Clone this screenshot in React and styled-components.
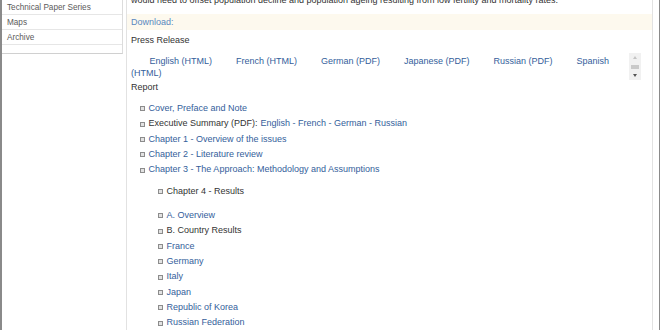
import React from 'react'
import styled, { createGlobalStyle } from 'styled-components'

const Global = createGlobalStyle`
  html, body {
    margin: 0;
    padding: 0;
    background: #fff;
  }
  body {
    font-family: "Liberation Sans", Arial, sans-serif;
    color: #333;
  }
`

const Page = styled.div`
  width: 660px;
  height: 330px;
  box-sizing: border-box;
  display: flex;
  overflow: hidden;
  border-left: 2px solid #8a8a8a;
  border-right: 1px solid #8a8a8a;
  background: #fff;
`

const Sidebar = styled.ul`
  list-style: none;
  margin: 0;
  padding: 0;
  width: 120px;
  flex: none;
  align-self: flex-start;
  border-right: 1px solid #dcdcdc;
  border-bottom: 1px solid #d0d0d0;
`

const SideItem = styled.li`
  height: 14px;
  line-height: 15px;
  padding-left: 5px;
  font-size: 8.2px;
  color: #5a5a5a;
  border-bottom: 1px solid #e6e6e6;
  &:last-child {
    border-bottom: none;
    height: 7.5px;
  }
`

const Main = styled.div`
  flex: 1;
  margin-left: 3px;
  margin-right: 6px;
  border-left: 1px solid #e2e2e2;
  border-right: 1px solid #e2e2e2;
  font-size: 9px;
  color: #333;
`

const Intro = styled.p`
  margin: -7px 0 0;
  padding-left: 4px;
  height: 14px;
  line-height: 14px;
  white-space: nowrap;
`

const DownloadBar = styled.div`
  margin-top: 7px;
  height: 16px;
  line-height: 16px;
  padding-left: 4px;
  background: #fdf9ee;
  color: #5a88bf;
`

const Label = styled.div`
  padding-left: 4px;
  height: ${p => p.$h || 12}px;
  line-height: ${p => p.$h || 12}px;
`

const LinksRow = styled.div`
  display: flex;
  align-items: flex-start;
  padding-left: 4px;
  margin-top: 5px;
`

const LinksText = styled.div`
  width: 495px;
  line-height: 12px;
`

const LangLink = styled.a`
  color: #34609b;
  text-decoration: none;
  margin-left: ${p => p.$first ? 18.5 : 24}px;
`

const Scroller = styled.div`
  width: 12px;
  height: 27px;
  margin-left: 3px;
  margin-top: -2px;
  background: #f1f1f1;
  display: flex;
  flex-direction: column;
  align-items: center;
  justify-content: space-between;
  padding: 3px 0;
  box-sizing: border-box;
`

const Arrow = styled.div`
  width: 0;
  height: 0;
  border-left: 2.5px solid transparent;
  border-right: 2.5px solid transparent;
  ${p => p.$down
    ? 'border-top: 3px solid #555;'
    : 'border-bottom: 3px solid #c4c4c4;'}
`

const Thumb = styled.div`
  width: 8px;
  height: 4px;
  background: #c9c9c9;
`

const List = styled.ul`
  list-style: none;
  margin: ${p => p.$top || 0}px 0 0;
  padding-left: ${p => p.$indent}px;
`

const Item = styled.li`
  display: flex;
  align-items: center;
  height: 15.35px;
  line-height: 15.35px;
  color: ${p => p.$plain ? '#333' : '#34609b'};
  &::before {
    content: '';
    width: 3px;
    height: 3px;
    border: 1px solid #8c8c8c;
    background: #e2e2e2;
    margin-right: 3.5px;
    flex: none;
  }
`

const Blue = styled.span`
  color: #34609b;
  margin-left: 3px;
`

const langs = [
  'English (HTML)',
  'French (HTML)',
  'German (PDF)',
  'Japanese (PDF)',
  'Russian (PDF)',
  'Spanish (HTML)',
]

const chapters = [
  'Chapter 1 - Overview of the issues',
  'Chapter 2 - Literature review',
  'Chapter 3 - The Approach: Methodology and Assumptions',
]

const countries = ['France', 'Germany', 'Italy', 'Japan', 'Republic of Korea', 'Russian Federation']

export default function App () {
  return (
    <Page>
      <Global />
      <Sidebar>
        <SideItem>Technical Paper Series</SideItem>
        <SideItem>Maps</SideItem>
        <SideItem>Archive</SideItem>
        <SideItem />
      </Sidebar>
      <Main>
        <Intro>would need to offset population decline and population ageing resulting from low fertility and mortality rates.</Intro>
        <DownloadBar>Download:</DownloadBar>
        <Label $h={20}>Press Release</Label>
        <LinksRow>
          <LinksText>
            {langs.map((l, i) => (
              <LangLink key={l} href="#" $first={i === 0}>{l}</LangLink>
            ))}
          </LinksText>
          <Scroller>
            <Arrow />
            <Thumb />
            <Arrow $down />
          </Scroller>
        </LinksRow>
        <Label $h={14}>Report</Label>
        <List $indent={13} $top={7}>
          <Item>Cover, Preface and Note</Item>
          <Item $plain>Executive Summary (PDF):<Blue>English - French - German - Russian</Blue></Item>
          {chapters.map(c => <Item key={c}>{c}</Item>)}
        </List>
        <List $indent={31} $top={6.5}>
          <Item $plain>Chapter 4 - Results</Item>
        </List>
        <List $indent={31} $top={8.5}>
          <Item>A. Overview</Item>
          <Item $plain>B. Country Results</Item>
          {countries.map(c => <Item key={c}>{c}</Item>)}
        </List>
      </Main>
    </Page>
  )
}
